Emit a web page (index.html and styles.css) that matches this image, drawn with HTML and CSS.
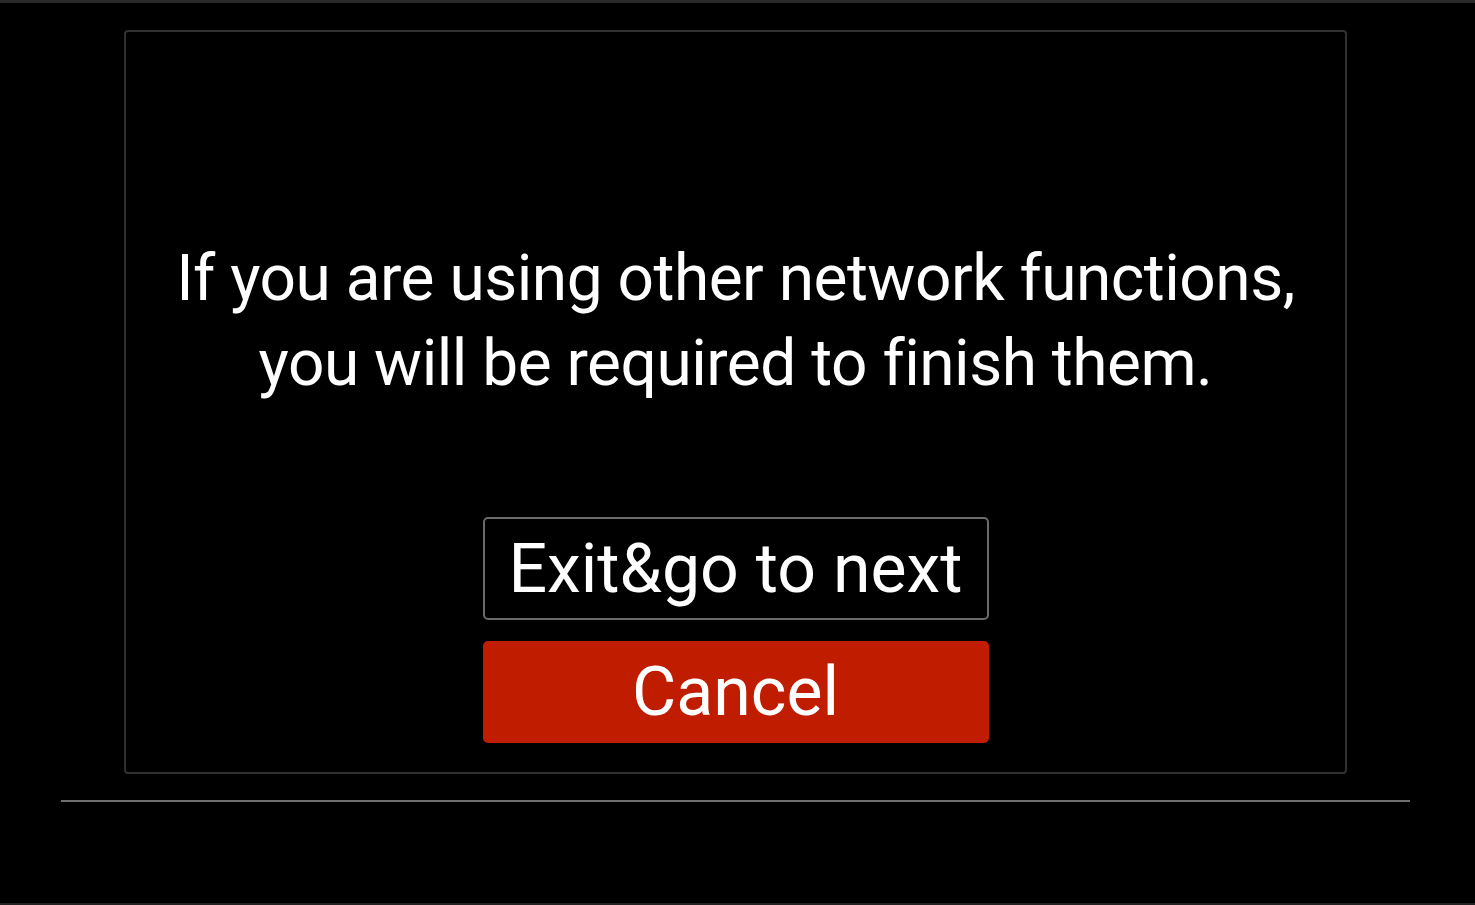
FILE: index.html
```html
<!DOCTYPE html>
<html>
<head>
<meta charset="utf-8">
<link rel="stylesheet" href="styles.css">
</head>
<body>
<div class="screen">
  <div class="topbar"></div>
  <div class="panel">
    <p class="message">If you are using other network functions,<br>you will be required to finish them.</p>
    <div class="buttons">
      <div class="btn btn-outline">Exit&amp;go to next</div>
      <div class="btn btn-red">Cancel</div>
    </div>
  </div>
  <div class="divider"></div>
  <div class="spacer"></div>
  <div class="bottombar"></div>
</div>
</body>
</html>
```
FILE: styles.css
```css
html, body {
  margin: 0;
  padding: 0;
  background: #000;
}
.screen {
  width: 1475px;
  height: 905px;
  display: flex;
  flex-direction: column;
  background: #000;
  font-family: Roboto, "DejaVu Sans", sans-serif;
  color: #fff;
}
.topbar {
  height: 3px;
  background: #2a2a2a;
  flex: none;
}
.panel {
  flex: none;
  box-sizing: border-box;
  margin: 27px 0 0 124px;
  width: 1223px;
  height: 744px;
  border: 2px solid #303030;
  border-radius: 4px;
  display: flex;
  flex-direction: column;
  align-items: center;
}
.message {
  margin: 204px 0 0 0;
  font-size: 64px;
  line-height: 85px;
  text-align: center;
  letter-spacing: -0.5px;
  white-space: nowrap;
}
.buttons {
  margin-top: 111px;
  display: flex;
  flex-direction: column;
  gap: 21px;
}
.btn {
  box-sizing: border-box;
  width: 506px;
  height: 103px;
  border-radius: 5px;
  display: flex;
  align-items: center;
  justify-content: center;
  font-size: 68px;
  white-space: nowrap;
}
.btn-outline {
  border: 2px solid #6a6a6a;
}
.btn-red {
  height: 102px;
  background: #c01c00;
}
.divider {
  flex: none;
  margin: 26px 0 0 61px;
  width: 1349px;
  height: 2px;
  background: #6e6e6e;
}
.spacer {
  flex: 1;
}
.bottombar {
  flex: none;
  height: 2px;
  background: #222;
}
```
